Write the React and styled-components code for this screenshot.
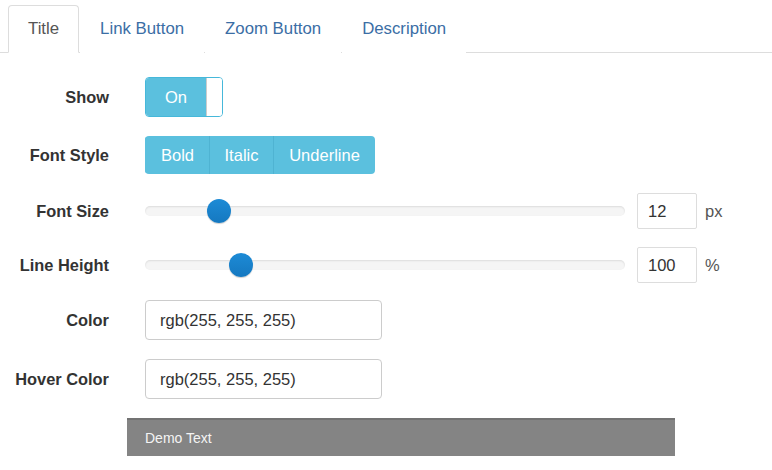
import React, { useState } from 'react';
import styled, { createGlobalStyle } from 'styled-components';

const GlobalStyle = createGlobalStyle`
  body {
    margin: 0;
    background: #fff;
    font-family: "Liberation Sans", Arial, sans-serif;
    color: #333;
  }
`;

const Page = styled.div`
  width: 772px;
  height: 470px;
  overflow: hidden;
`;

const TabBar = styled.ul`
  display: flex;
  margin: 0;
  padding: 5px 0 0 8px;
  list-style: none;
  border-bottom: 1px solid #ddd;
`;

const Tab = styled.li`
  height: 46px;
  display: flex;
  align-items: center;
  padding: 0 19px;
  margin-right: 1px;
  margin-bottom: -1px;
  font-size: 16.8px;
  border: 1px solid ${p => (p.$active ? '#ddd' : 'transparent')};
  border-bottom-color: ${p => (p.$active ? '#fff' : 'transparent')};
  border-radius: 4px 4px 0 0;
  background: #fff;
  color: ${p => (p.$active ? '#555' : '#3b6ea5')};
  cursor: pointer;
`;

const Form = styled.div`
  display: flex;
  flex-direction: column;
  gap: 19px;
  padding-top: 24px;
`;

const Row = styled.div`
  display: grid;
  grid-template-columns: 109px 1fr;
  column-gap: 36px;
  align-items: center;
  height: ${p => p.$h}px;
`;

const Label = styled.label`
  text-align: right;
  font-weight: bold;
  font-size: 16.4px;
  color: #333;
  white-space: nowrap;
`;

const Toggle = styled.div`
  display: flex;
  width: 78px;
  height: 40px;
  box-sizing: border-box;
  border: 1px solid #46b8da;
  border-radius: 4px;
  overflow: hidden;
`;

const ToggleOn = styled.div`
  flex: 1;
  display: flex;
  align-items: center;
  justify-content: center;
  background: #5bc0de;
  color: #fff;
  font-size: 16.5px;
`;

const ToggleKnob = styled.div`
  width: 15px;
  background: #fff;
  border-left: 1px solid #ccc;
`;

const Group = styled.div`
  display: flex;
  width: max-content;
  height: 38px;
  border-radius: 4px;
  overflow: hidden;
`;

const GroupButton = styled.button`
  width: ${p => p.$w}px;
  border: none;
  border-left: 1px solid ${p => (p.$first ? '#5bc0de' : '#4fb3d2')};
  background: #5bc0de;
  color: #fff;
  font-family: inherit;
  font-size: 16.5px;
  padding: 0;
  cursor: pointer;
`;

const SliderLine = styled.div`
  display: flex;
  align-items: center;
`;

const Track = styled.div`
  position: relative;
  width: 480px;
  height: 10px;
  border-radius: 5px;
  background: #f5f5f5;
  box-shadow: inset 0 1px 2px rgba(0, 0, 0, 0.1);
`;

const Thumb = styled.div`
  position: absolute;
  top: 50%;
  width: 24px;
  height: 24px;
  margin: -12px 0 0 -12px;
  border-radius: 50%;
  background: linear-gradient(#1d8bd6, #1578c0);
  box-shadow: 0 1px 1px rgba(0, 0, 0, 0.2);
`;

const NumberBox = styled.input`
  width: 60px;
  height: 36px;
  box-sizing: border-box;
  margin-left: 12px;
  padding: 0 10px;
  border: 1px solid #ddd;
  border-radius: 2px;
  font-family: inherit;
  font-size: 16.5px;
  color: #333;
`;

const Unit = styled.span`
  margin-left: 8px;
  font-size: 16.5px;
  color: #555;
`;

const TextBox = styled.input`
  width: 237px;
  height: 40px;
  box-sizing: border-box;
  padding: 0 14px;
  border: 1px solid #ccc;
  border-radius: 4px;
  font-family: inherit;
  font-size: 16.5px;
  color: #333;
`;

const Demo = styled.div`
  margin-left: 127px;
  width: 548px;
  height: 38px;
  box-sizing: border-box;
  padding-left: 18px;
  display: flex;
  align-items: center;
  background: #848484;
  border-top: 2px solid #737373;
  color: #f4f4f4;
  font-size: 14px;
`;

function Slider({ value, max, unit }) {
  return (
    <SliderLine>
      <Track>
        <Thumb style={{ left: `${(value / max) * 100}%` }} />
      </Track>
      <NumberBox defaultValue={value} />
      <Unit>{unit}</Unit>
    </SliderLine>
  );
}

export default function App() {
  const [tab, setTab] = useState('Title');
  const tabs = ['Title', 'Link Button', 'Zoom Button', 'Description'];

  return (
    <Page>
      <GlobalStyle />
      <TabBar>
        {tabs.map(t => (
          <Tab key={t} $active={t === tab} onClick={() => setTab(t)}>{t}</Tab>
        ))}
      </TabBar>
      <Form>
        <Row $h={40}>
          <Label>Show</Label>
          <Toggle>
            <ToggleOn>On</ToggleOn>
            <ToggleKnob />
          </Toggle>
        </Row>
        <Row $h={38}>
          <Label>Font Style</Label>
          <Group>
            <GroupButton $first $w={64}>Bold</GroupButton>
            <GroupButton $w={64}>Italic</GroupButton>
            <GroupButton $w={102}>Underline</GroupButton>
          </Group>
        </Row>
        <Row $h={35}>
          <Label>Font Size</Label>
          <Slider value={12} max={78} unit="px" />
        </Row>
        <Row $h={34}>
          <Label>Line Height</Label>
          <Slider value={100} max={500} unit="%" />
        </Row>
        <Row $h={40}>
          <Label>Color</Label>
          <TextBox defaultValue="rgb(255, 255, 255)" />
        </Row>
        <Row $h={40}>
          <Label>Hover Color</Label>
          <TextBox defaultValue="rgb(255, 255, 255)" />
        </Row>
        <Demo>Demo Text</Demo>
      </Form>
    </Page>
  );
}
